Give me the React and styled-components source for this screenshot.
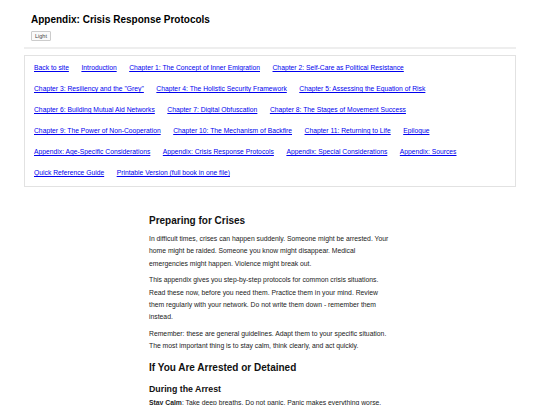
import React from 'react'
import styled, { createGlobalStyle } from 'styled-components'

const links = [
  'Back to site',
  'Introduction',
  'Chapter 1: The Concept of Inner Emigration',
  'Chapter 2: Self-Care as Political Resistance',
  'Chapter 3: Resiliency and the "Grey"',
  'Chapter 4: The Holistic Security Framework',
  'Chapter 5: Assessing the Equation of Risk',
  'Chapter 6: Building Mutual Aid Networks',
  'Chapter 7: Digital Obfuscation',
  'Chapter 8: The Stages of Movement Success',
  'Chapter 9: The Power of Non-Cooperation',
  'Chapter 10: The Mechanism of Backfire',
  'Chapter 11: Returning to Life',
  'Epilogue',
  'Appendix: Age-Specific Considerations',
  'Appendix: Crisis Response Protocols',
  'Appendix: Special Considerations',
  'Appendix: Sources',
  'Quick Reference Guide',
  'Printable Version (full book in one file)',
]

function App() {
  return (
    <Page>
      <GlobalStyle />
      <Header>
        <Title>Appendix: Crisis Response Protocols</Title>
        <ThemeButton>Light</ThemeButton>
      </Header>
      <Nav>
        {links.map((l) => (
          <NavLink key={l} href="#">{l}</NavLink>
        ))}
      </Nav>
      <Article>
        <H2>Preparing for Crises</H2>
        <P>
          In difficult times, crises can happen suddenly. Someone might be arrested. Your
          home might be raided. Someone you know might disappear. Medical
          emergencies might happen. Violence might break out.
        </P>
        <P>
          This appendix gives you step-by-step protocols for common crisis situations.
          Read these now, before you need them. Practice them in your mind. Review
          them regularly with your network. Do not write them down - remember them
          instead.
        </P>
        <P>
          Remember: these are general guidelines. Adapt them to your specific situation.
          The most important thing is to stay calm, think clearly, and act quickly.
        </P>
        <H2 $section>If You Are Arrested or Detained</H2>
        <H3>During the Arrest</H3>
        <P>
          <strong>Stay Calm</strong>: Take deep breaths. Do not panic. Panic makes everything worse.
        </P>
      </Article>
    </Page>
  )
}

export default App

const GlobalStyle = createGlobalStyle`
  html, body {
    margin: 0;
    padding: 0;
    background: #fff;
    overflow: hidden;
  }
  body {
    font-family: "Liberation Sans", Arial, sans-serif;
    color: #222;
  }
`

const Page = styled.div`
  width: 540px;
  height: 405px;
  overflow: hidden;
  padding: 0 24px;
  box-sizing: border-box;
`

const Header = styled.div`
  padding: 12px 7px 6px;
  border-bottom: 2px solid #eee;
  display: flex;
  flex-direction: column;
  align-items: flex-start;
`

const Title = styled.h1`
  margin: 0;
  font-size: 10px;
  font-weight: 700;
  line-height: 16px;
  color: #000;
`

const ThemeButton = styled.button`
  margin-top: 3px;
  padding: 0 3px;
  height: 10px;
  font-family: "Liberation Sans", Arial, sans-serif;
  font-size: 5.5px;
  line-height: 8px;
  color: #444;
  background: #fafafa;
  border: 1px solid #ccc;
  border-radius: 1px;
`

const Nav = styled.nav`
  margin-top: 6px;
  border: 1px solid #e2e2e2;
  padding: 1px 10px 3px 9px;
  display: flex;
  flex-wrap: wrap;
  column-gap: 12.5px;
  align-items: center;
`

const NavLink = styled.a`
  display: block;
  font-size: 6.75px;
  line-height: 21px;
  color: #0000ee;
  text-decoration: underline;
  white-space: nowrap;
`

const Article = styled.main`
  width: 242px;
  margin: 26px auto 0;
`

const H2 = styled.h2`
  margin: ${(p) => (p.$section ? '7px 0 0' : '0 0 4px')};
  font-size: 10px;
  font-weight: 700;
  line-height: 16px;
  color: #111;
`

const H3 = styled.h3`
  margin: 7px 0 2px;
  font-size: 8.8px;
  font-weight: 700;
  line-height: 12px;
  color: #111;
`

const P = styled.p`
  margin: 0 0 4px;
  font-size: 6.8px;
  line-height: 12.4px;
  color: #222;

  strong {
    font-weight: 700;
  }
`
